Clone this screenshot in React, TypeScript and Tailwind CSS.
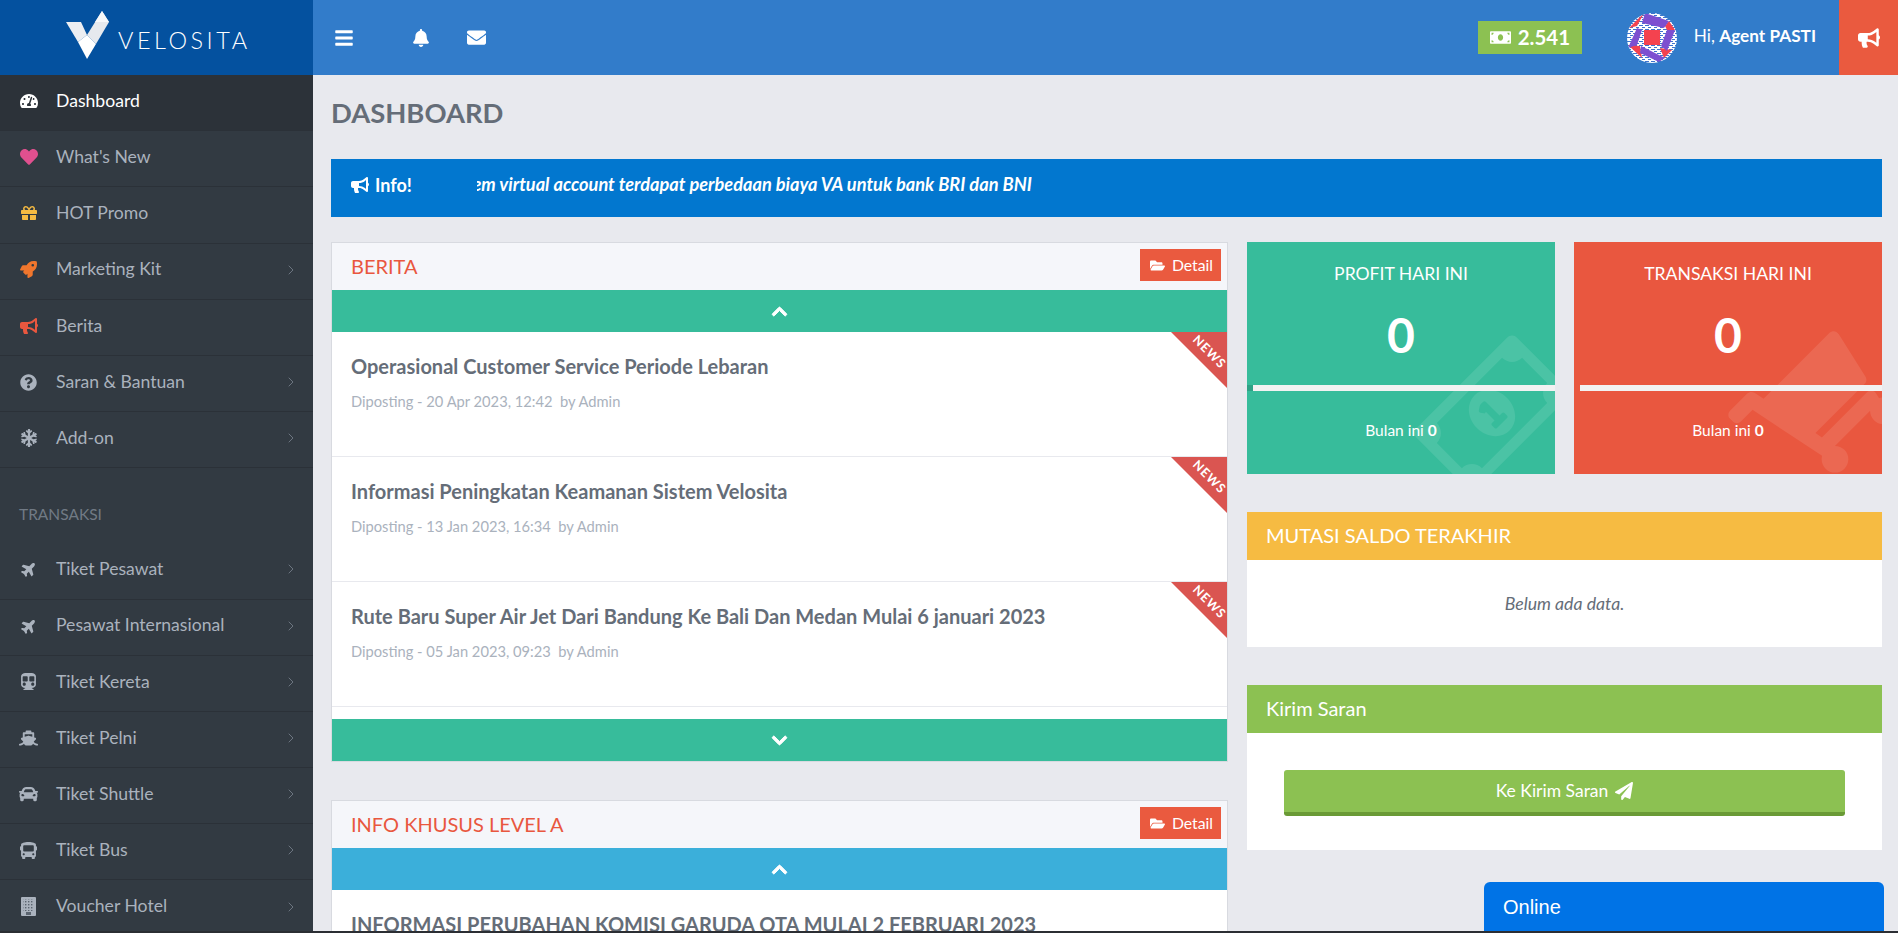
import { ChevronRight } from 'lucide-react'
import type { ComponentType, ReactNode } from 'react'
import {
  FaBars, FaBell, FaBullhorn, FaBus, FaCar, FaChevronDown, FaChevronUp, FaEnvelope,
  FaFolderOpen, FaGift, FaHeart, FaMoneyBill, FaPaperPlane, FaPlane, FaQuestionCircle, FaRegMoneyBillAlt,
  FaRocket, FaShip, FaShoppingCart, FaSnowflake, FaSubway, FaTachometerAlt,
} from 'react-icons/fa'

type MenuItem = { label: string; icon: ComponentType<{ size?: number; className?: string }>; size?: number; color?: string; arrow?: boolean; active?: boolean }

function HotelIcon() {
  return (
    <svg width="15" height="19" viewBox="0 0 15 19">
      <defs>
        <pattern id="win" width="3" height="3" patternUnits="userSpaceOnUse">
          <rect width="3" height="3" fill="#aab2bd" />
          <rect x="1" y="1" width="1.4" height="1.4" fill="#5b646f" />
        </pattern>
      </defs>
      <rect width="15" height="19" rx="1" fill="#aab2bd" />
      <rect x="2" y="2" width="11" height="12" fill="url(#win)" />
      <rect x="5" y="15" width="5" height="3" fill="#5b646f" />
    </svg>
  )
}

function TiltedPlane({ size }: { size?: number }) {
  return <FaPlane size={size} className="-rotate-45" />
}

const mainMenu: MenuItem[] = [
  { label: 'Dashboard', icon: FaTachometerAlt, color: 'text-white', active: true },
  { label: "What's New", icon: FaHeart, color: 'text-[#e0508f]' },
  { label: 'HOT Promo', icon: FaGift, size: 16, color: 'text-[#f6bb42]' },
  { label: 'Marketing Kit', icon: FaRocket, size: 17, color: 'text-[#f0762d]', arrow: true },
  { label: 'Berita', icon: FaBullhorn, color: 'text-[#e9573f]' },
  { label: 'Saran & Bantuan', icon: FaQuestionCircle, size: 17, arrow: true },
  { label: 'Add-on', icon: FaSnowflake, arrow: true },
]

const transaksiMenu: MenuItem[] = [
  { label: 'Tiket Pesawat', icon: TiltedPlane, size: 16, arrow: true },
  { label: 'Pesawat Internasional', icon: TiltedPlane, size: 16, arrow: true },
  { label: 'Tiket Kereta', icon: FaSubway, size: 17, arrow: true },
  { label: 'Tiket Pelni', icon: FaShip, size: 20, arrow: true },
  { label: 'Tiket Shuttle', icon: FaCar, size: 20, arrow: true },
  { label: 'Tiket Bus', icon: FaBus, size: 17, arrow: true },
  { label: 'Voucher Hotel', icon: HotelIcon, arrow: true },
]

const news = [
  { title: 'Operasional Customer Service Periode Lebaran', meta: 'Diposting - 20 Apr 2023, 12:42' },
  { title: 'Informasi Peningkatan Keamanan Sistem Velosita', meta: 'Diposting - 13 Jan 2023, 16:34' },
  { title: 'Rute Baru Super Air Jet Dari Bandung Ke Bali Dan Medan Mulai 6 januari 2023', meta: 'Diposting - 05 Jan 2023, 09:23' },
]

function Logo() {
  return (
    <svg width="43" height="50" viewBox="0 0 43 50" className="mb-[5px] shrink-0">
      <polygon points="0,12 15,12 21,25 12,32" fill="#eceef2" />
      <polygon points="21,25 36,1 43,12 30,34" fill="#e6e9ee" />
      <polygon points="36,1 43,12 33,12 29,12" fill="#f7f8fa" />
      <polygon points="21,25 30,34 21,49 12,32" fill="#ffffff" />
    </svg>
  )
}

function Avatar() {
  return (
    <svg width="50" height="50" viewBox="0 0 50 50" className="shrink-0">
      <defs>
        <pattern id="dots" width="6" height="4" patternUnits="userSpaceOnUse">
          <rect width="6" height="4" fill="#ffffff" />
          <rect width="4" height="1" fill="#3f74cf" />
          <rect x="3" y="2" width="3" height="1" fill="#3f74cf" />
        </pattern>
        <clipPath id="round">
          <circle cx="25" cy="25" r="25" />
        </clipPath>
      </defs>
      <g clipPath="url(#round)">
        <rect width="50" height="50" fill="url(#dots)" />
        <polygon points="2,15 17,0 10,13" fill="#f4424f" />
        <polygon points="38,13 42,8 48,17 40,17" fill="#f4424f" />
        <polygon points="1,32 13,33 15,45" fill="#f4424f" />
        <polygon points="33,35 45,37 37,45" fill="#f4424f" />
        <polygon points="18,0 42,8 37,15 15,10" fill="#7d4fd0" />
        <polygon points="48,17 40,38 34,33 40,17" fill="#7d4fd0" />
        <polygon points="14,33 38,45 32,49 13,40" fill="#7d4fd0" />
        <polygon points="1,35 10,15 15,17 10,32" fill="#7d4fd0" />
        <rect x="17" y="17" width="16" height="15" fill="#f4424f" />
      </g>
    </svg>
  )
}

function SideRow({ item }: { item: MenuItem }) {
  const Icon = item.icon
  return (
    <div className={`flex h-[56.2px] items-center border-b border-[#2b3138] pb-[3px] pl-[19px] pr-[14px] ${item.active ? 'bg-[#2c3239] text-white' : 'text-[#aab2bd]'}`}>
      <span className={`flex w-[19px] justify-center ${item.color ?? 'text-[#aab2bd]'}`}>
        <Icon size={item.size ?? 18} />
      </span>
      <span className="ml-[18px] flex-1 text-[17.6px]">{item.label}</span>
      {item.arrow && <ChevronRight size={16} strokeWidth={1.4} className="text-[#717a85]" />}
    </div>
  )
}

function NewsRibbon() {
  return (
    <div className="absolute right-0 top-0 h-[56px] w-[56px]">
      <div className="absolute right-0 top-0 h-0 w-0 border-l-[56px] border-t-[56px] border-l-transparent border-t-[#da5551]" />
      <span className="absolute left-[13px] top-[11px] w-[50px] rotate-45 text-center text-[12.5px] font-bold tracking-[1px] text-white">NEWS</span>
    </div>
  )
}

function DetailButton() {
  return (
    <button className="mt-[6px] flex h-8 w-[81px] items-center justify-center gap-[7px] self-start bg-[#ea5a3f] pl-[2px] text-[15.8px] text-white">
      <FaFolderOpen size={15} />
      Detail
    </button>
  )
}

function NewsRow({ title, meta }: { title: string; meta: string }) {
  return (
    <div className="relative h-[125px] border-b border-[#e8e9ee] px-[19px] pt-[21px]">
      <NewsRibbon />
      <h3 className="text-[20px] font-bold leading-[26px] text-[#656d78]">{title}</h3>
      <p className="mt-[12px] text-[14.7px] leading-[20px] text-[#aab2bd]">{meta} &nbsp;by Admin</p>
    </div>
  )
}

function BarArrow({ color, down }: { color: string; down?: boolean }) {
  const Arrow = down ? FaChevronDown : FaChevronUp
  return (
    <div className={`flex h-[42px] items-center justify-center text-white ${color}`}>
      <Arrow size={17} stroke="currentColor" strokeWidth={30} />
    </div>
  )
}

function StatCard({ title, color, icon, barEdge }: { title: string; color: string; icon: ReactNode; barEdge: string }) {
  return (
    <div className={`relative h-[232px] w-[308px] shrink-0 overflow-hidden text-center text-white ${color}`}>
      {icon}
      <div className="relative pt-[21px] text-[17.6px] leading-[22px]">{title}</div>
      <div className="relative mt-[15px] text-[48px] font-bold leading-[70px]">0</div>
      <div className="relative mt-[15px] flex h-[6px]">
        <span className={`w-[6px] ${barEdge}`} />
        <span className="flex-1 bg-[#f2f2f2]" />
      </div>
      <div className="relative mt-[28px] text-[15.5px]">Bulan ini <b>0</b></div>
    </div>
  )
}

export default function App() {
  return (
    <div className="flex h-[933px] flex-col overflow-hidden bg-[#e8e9ee] font-['Lato','Noto_Sans',sans-serif]">
      <div className="flex min-h-0 flex-1">
        <aside className="w-[313px] shrink-0 overflow-hidden bg-[#323a42]">
          <div className="flex h-[75px] items-center gap-[9px] bg-[#04519f] pl-[66px] text-white">
            <Logo />
            <span className="mt-[6px] text-[23.5px] font-light tracking-[3.5px]">VELOSITA</span>
          </div>
          {mainMenu.map((m) => <SideRow key={m.label} item={m} />)}
          <div className="flex h-[75px] items-center pl-[19px] pt-[18px] text-[15.5px] text-[#717a85]">TRANSAKSI</div>
          {transaksiMenu.map((m) => <SideRow key={m.label} item={m} />)}
        </aside>

        <div className="flex min-w-0 flex-1 flex-col">
          <header className="flex h-[75px] shrink-0 items-center bg-[#327cca] pl-[21px] text-white">
            <FaBars size={20} />
            <FaBell size={18} className="ml-[58px]" />
            <FaEnvelope size={19} className="ml-[37px]" />
            <div className="ml-auto flex h-full items-center">
              <div className="flex h-[33px] w-[104px] items-center justify-center gap-[7px] bg-[#8cc152] text-[20.5px] font-bold">
                <FaMoneyBill size={21} />
                2.541
              </div>
              <div className="ml-[45px]"><Avatar /></div>
              <span className="mb-[3px] ml-[17px] text-[17.2px]">Hi, <b>Agent PASTI</b></span>
              <div className="ml-[23px] flex h-full w-[59px] items-center justify-center bg-[#ea5a3f]">
                <FaBullhorn size={22} />
              </div>
            </div>
          </header>

          <main className="relative min-h-0 flex-1 overflow-hidden pl-[18px] pr-[16px]">
            <h1 className="mt-[20px] text-[27.4px] font-bold leading-[36px] text-[#656d78]">DASHBOARD</h1>
            <div className="mt-[28px] flex h-[58px] items-center bg-[#0277cf] pb-[6px] pl-[20px] text-white">
              <FaBullhorn size={18} />
              <span className="ml-[6px] text-[18px] font-bold">Info!</span>
              <div className="ml-[65px] flex w-[555px] justify-end overflow-hidden">
                <span className="shrink-0 whitespace-nowrap text-[18.2px] font-bold italic">Sistem virtual account terdapat perbedaan biaya VA untuk bank BRI dan BNI</span>
              </div>
            </div>

            <div className="mt-[25px] flex gap-[19px]">
              <div className="w-[897px] shrink-0">
                <section className="border border-[#d8dae0] bg-white">
                  <div className="flex h-[47px] items-center justify-between bg-[#f5f6fa] pl-[19px] pr-[6px]">
                    <span className="mb-[2px] text-[20px] text-[#e9573f]">BERITA</span>
                    <DetailButton />
                  </div>
                  <BarArrow color="bg-[#37bc9b]" />
                  {news.map((n) => <NewsRow key={n.title} {...n} />)}
                  <div className="h-[12px]" />
                  <BarArrow color="bg-[#37bc9b]" down />
                </section>

                <section className="mt-[38px] border border-[#d8dae0] bg-white">
                  <div className="flex h-[47px] items-center justify-between bg-[#f5f6fa] pl-[19px] pr-[6px]">
                    <span className="mb-[2px] text-[20px] text-[#e9573f]">INFO KHUSUS LEVEL A</span>
                    <DetailButton />
                  </div>
                  <BarArrow color="bg-[#3bafda]" />
                  <h3 className="px-[19px] pt-[21px] text-[20px] font-bold leading-[26px] text-[#656d78]">INFORMASI PERUBAHAN KOMISI GARUDA OTA MULAI 2 FEBRUARI 2023</h3>
                </section>
              </div>

              <div className="min-w-0 flex-1">
                <div className="flex gap-[19px]">
                  <StatCard title="PROFIT HARI INI" color="bg-[#37bc9b]" icon={<FaRegMoneyBillAlt size={142} className="absolute bottom-[-10px] right-[-8px] -rotate-45 text-white/10" />} barEdge="bg-[#2ea286]" />
                  <StatCard title="TRANSAKSI HARI INI" color="bg-[#e9573f]" icon={<FaShoppingCart size={137} className="absolute bottom-[-4px] right-[-4px] -rotate-45 text-white/10" />} barEdge="bg-[#e9573f]" />
                </div>

                <section className="mt-[38px] bg-white">
                  <div className="flex h-[48px] items-center bg-[#f6bb42] px-[19px] pb-[2px] text-[20px] text-white">MUTASI SALDO TERAKHIR</div>
                  <p className="flex h-[87px] items-center justify-center pt-[2px] text-[17.7px] italic text-[#656d78]">Belum ada data.</p>
                </section>

                <section className="mt-[38px] bg-white">
                  <div className="flex h-[48px] items-center bg-[#8cc152] px-[19px] pb-[2px] text-[20px] text-white">Kirim Saran</div>
                  <div className="px-[37px] pb-[34px] pt-[37px]">
                    <button className="flex h-[46px] w-full items-center justify-center gap-[7px] rounded-[3px] border-b-4 border-[#6a9a36] bg-[#8cc152] text-[17.5px] text-white">
                      Ke Kirim Saran
                      <FaPaperPlane size={18} />
                    </button>
                  </div>
                </section>
              </div>
            </div>

            <div className="absolute bottom-0 right-[14px] flex h-[49px] w-[400px] items-center rounded-t-[6px] bg-[#0073e6] pl-[19px] font-['Liberation_Sans',sans-serif] text-[20px] text-white">
              Online
            </div>
          </main>
        </div>
      </div>
      <div className="h-[2px] shrink-0 bg-[#2b2e33]" />
    </div>
  )
}
